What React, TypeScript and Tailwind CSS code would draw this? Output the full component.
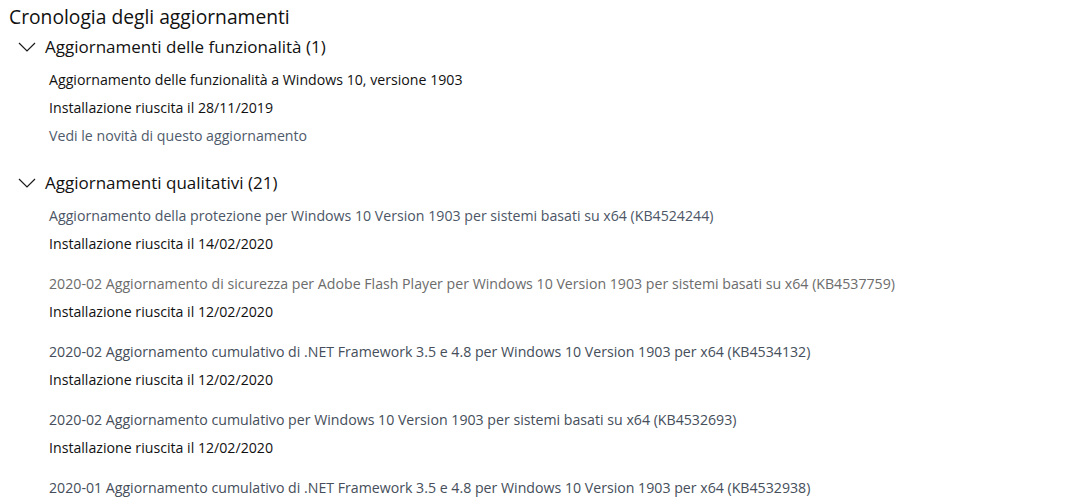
import { FC } from "react";

type Update = { title: string; date: string; tone: string };

const quality: Update[] = [
  {
    title:
      "Aggiornamento della protezione per Windows 10 Version 1903 per sistemi basati su x64 (KB4524244)",
    date: "Installazione riuscita il 14/02/2020",
    tone: "text-[#4c5666]",
  },
  {
    title:
      "2020-02 Aggiornamento di sicurezza per Adobe Flash Player per Windows 10 Version 1903 per sistemi basati su x64 (KB4537759)",
    date: "Installazione riuscita il 12/02/2020",
    tone: "text-[#6c6c6c]",
  },
  {
    title:
      "2020-02 Aggiornamento cumulativo di .NET Framework 3.5 e 4.8 per Windows 10 Version 1903 per x64 (KB4534132)",
    date: "Installazione riuscita il 12/02/2020",
    tone: "text-[#454e5a]",
  },
  {
    title:
      "2020-02 Aggiornamento cumulativo per Windows 10 Version 1903 per sistemi basati su x64 (KB4532693)",
    date: "Installazione riuscita il 12/02/2020",
    tone: "text-[#454e5a]",
  },
  {
    title:
      "2020-01 Aggiornamento cumulativo di .NET Framework 3.5 e 4.8 per Windows 10 Version 1903 per x64 (KB4532938)",
    date: "Installazione riuscita il 12/02/2020",
    tone: "text-[#454e5a]",
  },
];

const Chevron: FC = () => (
  <svg width="18" height="10" viewBox="0 0 18 10" className="shrink-0">
    <polyline
      points="1,1 9,9 17,1"
      fill="none"
      stroke="#1a1a1a"
      strokeWidth="1.2"
    />
  </svg>
);

const GroupHeader: FC<{ label: string }> = ({ label }) => (
  <div className="flex h-[26px] items-center gap-[9px] pl-[18px]">
    <Chevron />
    <span className="text-[17px] text-[#111]">{label}</span>
  </div>
);

export default function App() {
  return (
    <div className="h-[498px] w-[1082px] overflow-hidden bg-white font-['Open_Sans',sans-serif] text-black">
      <h1 className="flex h-[34px] items-center pl-[9px] text-[19.25px] font-normal text-[#111]">
        Cronologia degli aggiornamenti
      </h1>

      <GroupHeader label="Aggiornamenti delle funzionalità (1)" />
      <div className="mt-[6px] pl-[49px] text-[14.17px] leading-[28px]">
        <p className="text-[#111]">
          Aggiornamento delle funzionalità a Windows 10, versione 1903
        </p>
        <p className="text-[#111]">Installazione riuscita il 28/11/2019</p>
        <p className="text-[#4f5b6b]">Vedi le novità di questo aggiornamento</p>
      </div>

      <div className="mt-[20px]">
        <GroupHeader label="Aggiornamenti qualitativi (21)" />
      </div>
      <div className="mt-[6px] flex flex-col gap-[12px] pl-[49px] text-[14.17px] leading-[28px]">
        {quality.map((u) => (
          <div key={u.title}>
            <p className={u.tone}>{u.title}</p>
            <p className="text-[#111]">{u.date}</p>
          </div>
        ))}
      </div>
    </div>
  );
}
